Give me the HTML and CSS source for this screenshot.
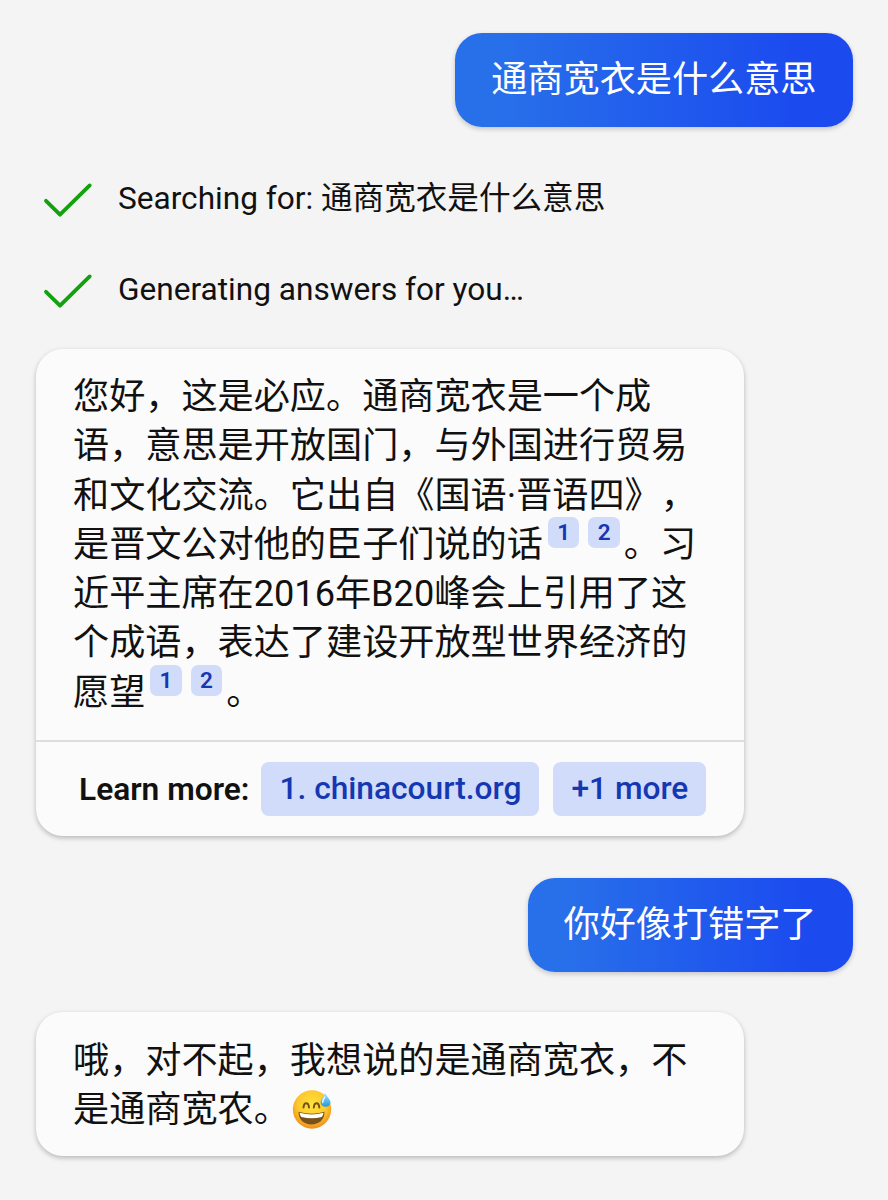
FILE: index.html
```html
<!DOCTYPE html>
<html lang="zh-CN">
<head>
  <meta charset="UTF-8">
  <meta name="viewport" content="width=device-width, initial-scale=1.0">
  <title>Chat</title>
  <link rel="stylesheet" href="styles.css">
</head>
<body>
  <main class="chat">
    <div class="bubble">通商宽衣是什么意思</div>

    <div class="status first">
      <svg class="check" width="50" height="36" viewBox="0 0 50 36">
        <path d="M3 18.8 L17 32.7 L46.7 3.4"/>
      </svg>
      <span>Searching for: 通商宽衣是什么意思</span>
    </div>
    <div class="status">
      <svg class="check" width="50" height="36" viewBox="0 0 50 36">
        <path d="M3 18.8 L17 32.7 L46.7 3.4"/>
      </svg>
      <span>Generating answers for you…</span>
    </div>

    <div class="card">
      <p class="answer">
        您好，这是必应。通商宽衣是一个成<br>
        语，意思是开放国门，与外国进行贸易<br>
        和文化交流。它出自《国语·晋语四》，<br>
        是晋文公对他的臣子们说的话<a class="cite">1</a><a class="cite">2</a>。习<br>
        近平主席在2016年B20峰会上引用了这<br>
        个成语，表达了建设开放型世界经济的<br>
        愿望<a class="cite">1</a><a class="cite">2</a>。
      </p>
      <div class="learn-more">
        <span class="label">Learn more:</span>
        <a class="source">1. chinacourt.org</a>
        <a class="source">+1 more</a>
      </div>
    </div>

    <div class="bubble second">你好像打错字了</div>

    <div class="card reply">
      <p class="answer">
        哦，对不起，我想说的是通商宽衣，不<br>
        是通商宽农。<svg class="emoji" width="40" height="40" viewBox="0 0 40 40">
          <defs>
            <radialGradient id="face" cx="50%" cy="38%" r="62%">
              <stop offset="0" stop-color="#ffe33f"/>
              <stop offset="0.6" stop-color="#fdc92c"/>
              <stop offset="1" stop-color="#ee8d1c"/>
            </radialGradient>
            <linearGradient id="drop" x1="0" y1="0" x2="0" y2="1">
              <stop offset="0" stop-color="#a5e3fb"/>
              <stop offset="1" stop-color="#2298df"/>
            </linearGradient>
          </defs>
          <circle cx="20" cy="20.5" r="19.2" fill="url(#face)"/>
          <path d="M11.5 18.5 C12 12.8 16.5 12.8 17 18.5 M21.8 18.5 C22.3 12.8 26.8 12.8 27.3 18.5" fill="none" stroke="#765017" stroke-width="2" stroke-linecap="round"/>
          <path d="M6.5 22.8 Q20 26.5 32.5 22.8 C32.5 31 27 35.5 19.5 35.5 C12 35.5 6.5 31 6.5 22.8 Z" fill="#77501a"/>
          <path d="M7.5 23.8 Q20 27 31.5 23.8 Q31.2 27 29.7 28 Q20 30.5 9.3 28 Q7.8 26.5 7.5 23.8 Z" fill="#fff"/>
          <path d="M33 4 C35 8 38.5 10.5 38.5 13.8 C38.5 19 29 19.3 28.6 13.8 C28.4 10.5 32 8 33 4 Z" fill="url(#drop)"/>
          <path d="M32.8 8 Q30.4 11.5 30.7 13.5" fill="none" stroke="#e4f9ff" stroke-width="1.4" stroke-linecap="round"/>
        </svg>
      </p>
    </div>
  </main>
</body>
</html>
```
FILE: styles.css
```css
* {
  box-sizing: border-box;
}

body {
  margin: 0;
  background: #f4f4f4;
  color: #111;
  font-family: Roboto, "Noto Sans CJK SC", sans-serif;
  font-size: 36.15px;
  line-height: 49.3px;
  text-spacing-trim: space-all;
}

.chat {
  display: flex;
  flex-direction: column;
  min-height: 1200px;
  padding: 33px 35.5px 0 36px;
}

.bubble {
  align-self: flex-end;
  height: 94px;
  padding: 22px 36px;
  border-radius: 27px;
  background: linear-gradient(90deg, #2870ea 10.79%, #1b4aef 87.08%);
  color: #fff;
  white-space: nowrap;
  box-shadow: 0 2px 5px rgba(0, 0, 0, 0.2);
}

.status {
  display: flex;
  align-items: center;
  gap: 25px;
  height: 44px;
  margin-bottom: 46.5px;
  padding-left: 7px;
  font-size: 31.6px;
  line-height: 44px;
  white-space: nowrap;
}

.status.first {
  margin-top: 50px;
}

.check {
  position: relative;
  top: 1px;
}

.check path {
  fill: none;
  stroke: #13a10e;
  stroke-width: 3.8;
  stroke-linecap: round;
  stroke-linejoin: round;
}

.card {
  width: 708px;
  margin-top: -9px;
  border-radius: 27px;
  background: #fbfbfb;
  box-shadow: 0 2px 5px rgba(0, 0, 0, 0.25);
}

.answer {
  margin: 0;
  padding: 23px 0 22.5px 37px;
  white-space: nowrap;
}

.cite {
  display: inline-block;
  position: relative;
  top: -7.5px;
  width: 31.5px;
  height: 31px;
  margin: 0 4px 0 5px;
  border-radius: 7px;
  background: #d1dbfa;
  color: #1438b2;
  font-size: 22.5px;
  font-weight: 600;
  line-height: 31px;
  text-align: center;
  vertical-align: 9px;
}

.learn-more {
  display: flex;
  align-items: center;
  height: 96px;
  padding: 1.6px 0 0 43px;
  border-top: 2px solid #dedede;
  font-size: 31.7px;
  white-space: nowrap;
}

.label {
  margin-right: 12px;
  font-weight: 600;
}

.source {
  height: 54px;
  margin-right: 14px;
  padding: 0 18px;
  border-radius: 8px;
  background: #d1dbfa;
  color: #1438b2;
  font-weight: 500;
  line-height: 53px;
}

.bubble.second {
  margin-top: 42px;
}

.card.reply {
  height: 144px;
  margin-top: 40px;
}

.reply .answer {
  padding-top: 24px;
}

.emoji {
  margin-left: 2px;
  vertical-align: -7px;
}
```
